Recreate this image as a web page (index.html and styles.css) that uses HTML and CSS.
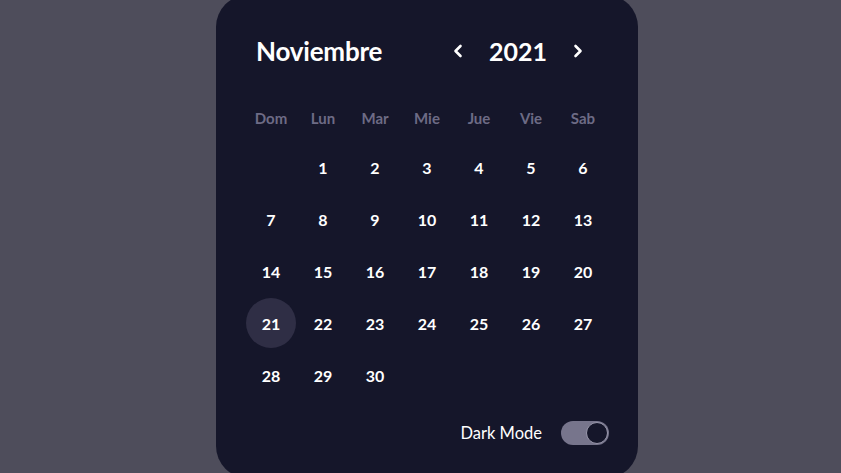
FILE: index.html
```html
<!DOCTYPE html>
<html lang="es">
<head>
<meta charset="utf-8">
<title>Calendario</title>
<link rel="stylesheet" href="styles.css">
</head>
<body>
<div class="card">
  <div class="header">
    <span class="month">Noviembre</span>
    <div class="year-nav">
      <span class="arrow">
        <svg width="12" height="16" viewBox="0 0 12 16"><path d="M8.5 3 L3.5 8 L8.5 13" fill="none" stroke="#ffffff" stroke-width="2.6" stroke-linecap="round" stroke-linejoin="round"/></svg>
      </span>
      <span class="year">2021</span>
      <span class="arrow">
        <svg width="12" height="16" viewBox="0 0 12 16"><path d="M3.5 3 L8.5 8 L3.5 13" fill="none" stroke="#ffffff" stroke-width="2.6" stroke-linecap="round" stroke-linejoin="round"/></svg>
      </span>
    </div>
  </div>
  <div class="weekdays">
    <span>Dom</span><span>Lun</span><span>Mar</span><span>Mie</span><span>Jue</span><span>Vie</span><span>Sab</span>
  </div>
  <div class="days">
    <span class="empty"></span>
    <span>1</span><span>2</span><span>3</span><span>4</span><span>5</span><span>6</span>
    <span>7</span><span>8</span><span>9</span><span>10</span><span>11</span><span>12</span><span>13</span>
    <span>14</span><span>15</span><span>16</span><span>17</span><span>18</span><span>19</span><span>20</span>
    <span class="today">21</span><span>22</span><span>23</span><span>24</span><span>25</span><span>26</span><span>27</span>
    <span>28</span><span>29</span><span>30</span>
  </div>
  <div class="footer">
    <span class="mode-label">Dark Mode</span>
    <span class="toggle"><span class="knob"></span></span>
  </div>
</div>
</body>
</html>
```
FILE: styles.css
```css
* { box-sizing: border-box; }
html, body { margin: 0; padding: 0; }
body {
  height: 100vh;
  background: #4e4d5b;
  display: flex;
  align-items: center;
  justify-content: center;
  padding-left: 13px;
  font-family: "Comic Sans MS", "Lato", "Noto Sans", sans-serif;
  color: #ffffff;
}
.card {
  width: 422px;
  flex-shrink: 0;
  background: #15162a;
  border-radius: 32px;
  padding: 31px 29px 33px;
}
.header {
  height: 50px;
  display: flex;
  align-items: center;
  justify-content: space-between;
  padding: 0 25px 0 11px;
}
.month {
  font-size: 26px;
  font-weight: 700;
  letter-spacing: -0.2px;
}
.year-nav {
  display: flex;
  align-items: center;
  gap: 25px;
}
.arrow { display: flex; align-items: center; }
.year {
  font-size: 25px;
  font-weight: 700;
}
.weekdays {
  margin-top: 18px;
  height: 47px;
  display: grid;
  grid-template-columns: repeat(7, 52px);
  align-items: center;
  justify-items: center;
  color: #6d6b85;
  font-size: 15px;
  font-weight: 700;
}
.days {
  display: grid;
  grid-template-columns: repeat(7, 52px);
  grid-auto-rows: 52px;
  align-items: center;
  justify-items: center;
  font-size: 16px;
  font-weight: 700;
}
.days span {
  width: 50px;
  height: 50px;
  border-radius: 50%;
  display: flex;
  align-items: center;
  justify-content: center;
}
.days .today { background: #2f2e45; }
.footer {
  margin-top: 20px;
  height: 24px;
  display: flex;
  align-items: center;
  justify-content: flex-end;
  gap: 19px;
}
.mode-label {
  font-size: 16.5px;
}
.toggle {
  width: 48px;
  height: 24px;
  border-radius: 12px;
  background: #77758c;
  position: relative;
}
.knob {
  position: absolute;
  right: 1px;
  top: 1px;
  width: 22px;
  height: 22px;
  border-radius: 50%;
  background: #15162a;
  border: 1.5px solid #9a98ac;
}
```
